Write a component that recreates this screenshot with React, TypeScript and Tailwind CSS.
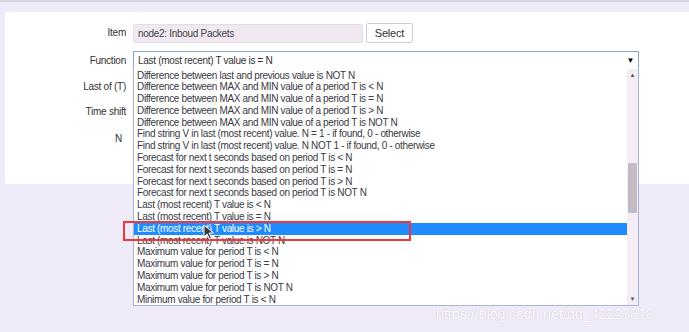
import React from 'react';

const options = [
  'Difference between last and previous value is NOT N',
  'Difference between MAX and MIN value of a period T is < N',
  'Difference between MAX and MIN value of a period T is = N',
  'Difference between MAX and MIN value of a period T is > N',
  'Difference between MAX and MIN value of a period T is NOT N',
  'Find string V in last (most recent) value. N = 1 - if found, 0 - otherwise',
  'Find string V in last (most recent) value. N NOT 1 - if found, 0 - otherwise',
  'Forecast for next t seconds based on period T is < N',
  'Forecast for next t seconds based on period T is = N',
  'Forecast for next t seconds based on period T is > N',
  'Forecast for next t seconds based on period T is NOT N',
  'Last (most recent) T value is < N',
  'Last (most recent) T value is = N',
  'Last (most recent) T value is > N',
  'Last (most recent) T value is NOT N',
  'Maximum value for period T is < N',
  'Maximum value for period T is = N',
  'Maximum value for period T is > N',
  'Maximum value for period T is NOT N',
  'Minimum value for period T is < N',
];

const selected = 13;

const Cursor = () => (
  <svg className="absolute left-[203px] top-[224px]" width="12" height="16" viewBox="0 0 12 16">
    <path d="M1 1 L1 13 L4 10 L6.5 15 L8.5 14 L6 9 L10.5 9 Z" fill="#3a3a3a" stroke="#ffffff" strokeWidth="1" strokeLinejoin="round" />
  </svg>
);

export default function App() {
  return (
    <div className="relative h-[332px] w-[689px] overflow-hidden bg-[#efeaf7] font-['Liberation_Sans',Arial,sans-serif] text-[#333]">
      <div className="h-[2px] bg-[#d9d3e0]" />
      <div className="relative ml-[5px] mt-[10px] h-[172px] bg-white">
        <div className="grid grid-cols-[121px_1fr] gap-x-[7px] pt-[11px] text-[10px] tracking-[-0.25px]">
          <div className="flex h-[19px] items-center justify-end">Item</div>
          <div className="flex items-center gap-[3px]">
            <div className="flex h-[19px] w-[230px] items-center rounded-[2px] border border-[#e6dce6] bg-[#f1e9f1] px-[4px] text-[10px] tracking-[-0.3px] text-[#444]">
              node2: Inboud Packets
            </div>
            <button className="h-[20px] w-[47px] rounded-[2px] border border-[#cfcfd6] bg-white text-[11px] tracking-[-0.2px] text-[#333]">
              Select
            </button>
          </div>
          <div className="mt-[8px] flex h-[19px] items-center justify-end">Function</div>
          <div className="mt-[8px] flex h-[19px] w-[506px] items-center justify-between border border-[#8aa6cc] bg-white pl-[4px] pr-[4px] text-[10px] tracking-[-0.3px] text-[#333]">
            <span>Last (most recent) T value is = N</span>
            <span className="text-[8px] text-black">▼</span>
          </div>
          <div className="mt-[7px] flex h-[19px] items-center justify-end">Last of (T)</div>
          <div />
          <div className="mt-[6px] flex h-[19px] items-center justify-end">Time shift</div>
          <div />
          <div className="mt-[8px] flex h-[19px] items-center justify-end pr-[4px]">N</div>
          <div />
        </div>
      </div>

      <div className="absolute left-[133px] top-[69px] flex h-[237px] w-[506px] border border-t-0 border-[#a9b4d8] bg-white">
        <ul className="flex-1 pt-[0.5px] text-[10px] tracking-[-0.33px] text-[#3a3a44]">
          {options.map((o, i) => (
            <li
              key={o}
              className={
                i === selected
                  ? 'h-[11.8px] whitespace-nowrap bg-[#1e8cff] pl-[3px] leading-[11.8px] text-white'
                  : 'h-[11.8px] whitespace-nowrap pl-[3px] leading-[11.8px]'
              }
            >
              {o}
            </li>
          ))}
        </ul>
        <div className="flex w-[11px] flex-col items-center bg-[#f3eef6]">
          <span className="mt-[2px] text-[6px] leading-[8px] text-[#555]">▲</span>
          <div className="mt-[84px] h-[50px] w-[9px] rounded-[1px] bg-[#c4bcc4]" />
          <span className="mt-auto mb-[2px] text-[6px] leading-[8px] text-[#555]">▼</span>
        </div>
      </div>

      <div className="absolute left-[123px] top-[221px] h-[20px] w-[288px] border-[2px] border-[#f0383a]" />
      <Cursor />

      <div className="absolute left-[436px] top-[304px] text-[14.2px] text-white [text-shadow:0_0_1px_#b8b0c0]">
        https://blog.csdn.net/qq_42227818
      </div>
    </div>
  );
}
